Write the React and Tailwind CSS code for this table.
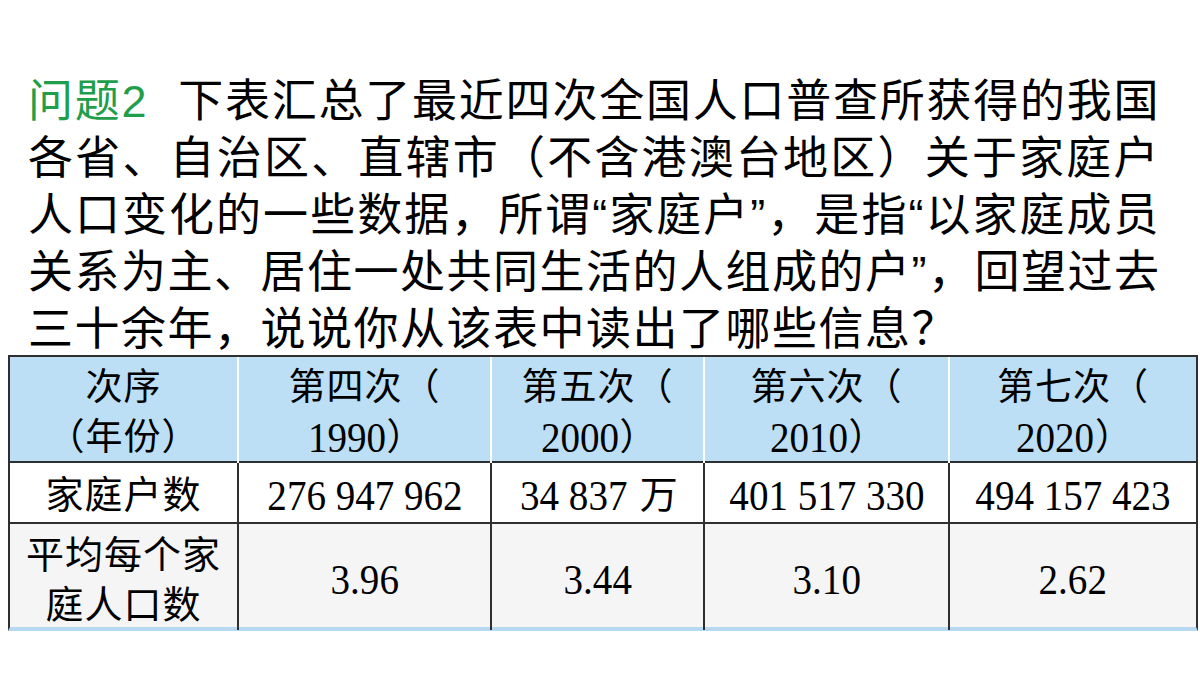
import React from 'react';

const lines = [
  '各省、自治区、直辖市（不含港澳台地区）关于家庭户',
  '人口变化的一些数据，所谓“家庭户”，是指“以家庭成员',
  '关系为主、居住一处共同生活的人组成的户”，回望过去',
];

const headers = [
  ['次序', '（年份）'],
  ['第四次（', '1990）'],
  ['第五次（', '2000）'],
  ['第六次（', '2010）'],
  ['第七次（', '2020）'],
];

const households = ['276 947 962', '34 837', '401 517 330', '494 157 423'];
const avgSize = ['3.96', '3.44', '3.10', '2.62'];

const cjk = "font-['Liberation_Sans','Noto_Sans_CJK_SC',sans-serif]";

// Times digits in the picture are a touch narrower than Liberation Serif
function Num({ children }) {
  return (
    <span className="inline-block scale-x-[0.93] font-['Liberation_Serif',serif] text-[42px] leading-none tracking-normal">
      {children}
    </span>
  );
}

export default function App() {
  return (
    <div className={`h-[675px] w-[1200px] overflow-hidden bg-white text-black ${cjk}`}>
      {/* Question text */}
      <div className="pl-[28px] pr-[40px] pt-[73px] text-[45px] leading-[57px] tracking-[1.5px]">
        <div className="whitespace-nowrap text-justify [text-align-last:justify]">
          <span className="text-[#1f9e4b]">问题2</span>
          <span className="inline-block w-[30px]" />
          下表汇总了最近四次全国人口普查所获得的我国
        </div>
        {lines.map((l) => (
          <div key={l} className="whitespace-nowrap text-justify [text-align-last:justify]">
            {l}
          </div>
        ))}
        <div className="whitespace-nowrap">三十余年，说说你从该表中读出了哪些信息？</div>
      </div>

      {/* Data table */}
      <div className="-mt-[3px] ml-[8px] w-[1190px] border-x-2 border-t-2 border-b-4 border-x-[#2f2f2f] border-t-[#2f2f2f] border-b-[#b6d9f1]">
        <div className="grid h-[104px] grid-cols-[227px_253px_213px_245px_248px] bg-[#bcdff5] text-[37px] leading-[50px] tracking-[1px]">
          {headers.map(([a, b], i) => (
            <div
              key={a}
              className={`flex flex-col items-center justify-center pt-[6px] ${i > 0 ? 'border-l-2 border-white' : ''}`}
            >
              <span>{a}</span>
              {i === 0 ? (
                <span>{b}</span>
              ) : (
                <span className="flex items-center">
                  <Num>{b.slice(0, 4)}</Num>
                  <span className="-ml-[2px]">）</span>
                </span>
              )}
            </div>
          ))}
        </div>

        <div className="grid h-[61px] grid-cols-[227px_253px_213px_245px_248px] border-t-2 border-[#2f2f2f] text-[38px] tracking-[1px]">
          <div className="flex items-center justify-center pt-[4px]">家庭户数</div>
          {households.map((h, i) => (
            <div key={h} className="flex items-center justify-center border-l-2 border-[#2f2f2f] pt-[4px]">
              <Num>{h}</Num>
              {i === 1 && <span className="ml-[8px] text-[38px]">万</span>}
            </div>
          ))}
        </div>

        <div className="grid h-[105px] grid-cols-[227px_253px_213px_245px_248px] border-t-2 border-[#2f2f2f] bg-[#f5f5f5] text-[38px] leading-[50px] tracking-[1px]">
          <div className="flex flex-col items-center justify-center pt-[6px]">
            <span>平均每个家</span>
            <span>庭人口数</span>
          </div>
          {avgSize.map((v) => (
            <div key={v} className="flex items-center justify-center border-l-2 border-[#2f2f2f] pt-[6px]">
              <Num>{v}</Num>
            </div>
          ))}
        </div>
      </div>
    </div>
  );
}
